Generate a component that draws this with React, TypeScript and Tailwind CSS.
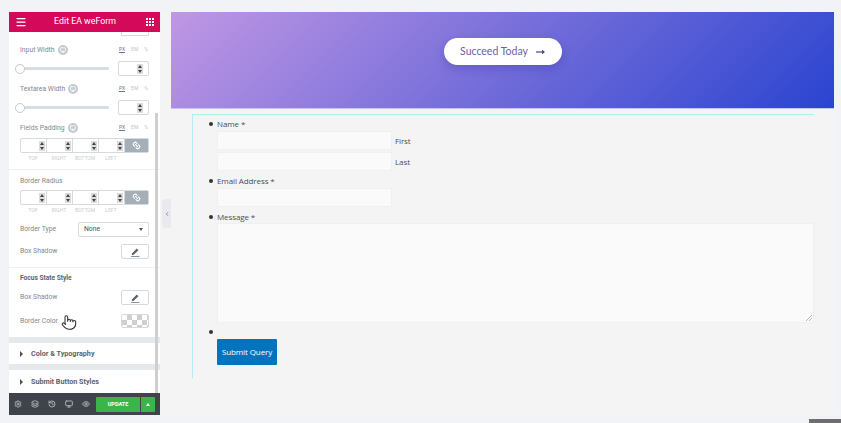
import React from 'react';
import { Menu, Link2, Settings, Layers, History, Monitor, Eye, ChevronLeft, Pointer } from 'lucide-react';

function Spinner() {
  return (
    <div className="w-[6px] h-[10px] bg-[#dcdcdc] flex flex-col items-center justify-center gap-[2px]">
      <span className="w-0 h-0 border-x-[2px] border-x-transparent border-b-[3px] border-b-[#444]" />
      <span className="w-0 h-0 border-x-[2px] border-x-transparent border-t-[3px] border-t-[#444]" />
    </div>
  );
}

function Units() {
  return (
    <div className="flex gap-[6px] text-[5px] text-[#c0c5ca]">
      <span className="text-[#6d7882] underline">PX</span>
      <span>EM</span>
      <span>%</span>
    </div>
  );
}

function InfoDot() {
  return (
    <span className="w-[10px] h-[10px] rounded-full bg-[#c3cad1] flex items-center justify-center">
      <Monitor className="w-[6px] h-[6px] text-white" strokeWidth={3} />
    </span>
  );
}

function SliderRow({ label }: { label: string }) {
  return (
    <div>
      <div className="flex items-center justify-between h-[12px] pr-[1px]">
        <div className="flex items-center gap-[3px]">
          <span>{label}</span>
          <InfoDot />
        </div>
        <Units />
      </div>
      <div className="flex items-center justify-between mt-[5px]">
        <div className="relative w-[90px] h-[3px] rounded bg-[#d5dde5] ml-[-1px]">
          <span className="absolute -left-[4px] -top-[3.5px] w-[10px] h-[10px] rounded-full bg-white border border-[#c4c9cd]" />
        </div>
        <div className="w-[31px] h-[15px] bg-white border border-[#d5dadf] rounded-[2px] flex items-center justify-end pr-[5px]">
          <Spinner />
        </div>
      </div>
    </div>
  );
}

function DimensionRow() {
  const sides = ['TOP', 'RIGHT', 'BOTTOM', 'LEFT'];
  return (
    <div>
      <div className="flex h-[15px] border border-[#d5dadf] rounded-[2px] bg-white">
        {sides.map((s) => (
          <div key={s} className="w-[26px] border-r border-[#d5dadf] flex items-center justify-end pr-[1px]">
            <Spinner />
          </div>
        ))}
        <div className="flex-1 bg-[#a4afb7] flex items-center justify-center">
          <Link2 className="w-[9px] h-[9px] text-white rotate-45" strokeWidth={3} />
        </div>
      </div>
      <div className="flex mt-[2px] text-[5px] leading-[7px] text-[#c8ccd0]">
        {sides.map((s) => (
          <span key={s} className="w-[26px] text-center">{s}</span>
        ))}
      </div>
    </div>
  );
}

function PenRow({ label }: { label: string }) {
  return (
    <div className="flex items-center justify-between h-[15px]">
      <span>{label}</span>
      <div className="w-[28px] h-[15px] bg-white border border-[#d5dadf] rounded-[2px] flex items-center justify-center">
        <svg width="10" height="10" viewBox="0 0 10 10" fill="#5a646c">
          <path d="M2.2 6.2L6.8 1.6 8.4 3.2 3.8 7.8 1.8 8.2Z" />
          <rect x="1" y="9" width="8.5" height="0.7" />
        </svg>
      </div>
    </div>
  );
}

function SectionTitle({ label, h }: { label: string; h: string }) {
  return (
    <div className={`${h} flex items-center pl-[11px] pt-[1px] gap-[8px] text-[7.2px] font-bold text-[#5a646c]`}>
      <span className="w-0 h-0 border-y-[3px] border-y-transparent border-l-[3px] border-l-[#495157]" />
      <span>{label}</span>
    </div>
  );
}

function Sidebar() {
  return (
    <aside className="w-[151px] h-[403px] flex flex-col bg-white font-['Roboto',sans-serif] text-[6.8px] text-[#7d8890] relative">
      <header className="h-[20px] shrink-0 bg-[#d5095a] text-white flex items-center justify-between px-[6px]">
        <Menu className="w-[12px] h-[12px]" strokeWidth={2.5} />
        <span className="text-[8.8px] ml-[-3px]">Edit EA weForm</span>
        <svg width="8" height="8" viewBox="0 0 8 8" fill="white">
          {[0, 3, 6].map((y) =>
            [0, 3, 6].map((x) => <rect key={`${x}-${y}`} x={x} y={y} width="2" height="2" />)
          )}
        </svg>
      </header>

      <div className="flex-1 overflow-hidden relative">
        <div className="pl-[11px] pr-[11px]">
          <div className="h-[4px] flex justify-end">
            <div className="w-[28px] h-[4px] border border-[#d5dadf] border-t-0 bg-white" />
          </div>
          <div className="mt-[8px]"><SliderRow label="Input Width" /></div>
          <div className="mt-[7px]"><SliderRow label="Textarea Width" /></div>
          <div className="mt-[7px]">
            <div className="flex items-center justify-between h-[12px] pr-[1px]">
              <div className="flex items-center gap-[3px]">
                <span>Fields Padding</span>
                <InfoDot />
              </div>
              <Units />
            </div>
            <div className="mt-[4px]"><DimensionRow /></div>
          </div>
        </div>

        <div className="mt-[7px] border-t border-[#eef0f2] pl-[11px] pr-[11px] pt-[6px]">
          <div className="h-[10px] flex items-center">Border Radius</div>
          <div className="mt-[4px]"><DimensionRow /></div>
          <div className="mt-[7px] flex items-center justify-between h-[16px]">
            <span>Border Type</span>
            <div className="w-[71px] h-[15px] bg-white border border-[#d5dadf] rounded-[2px] flex items-center justify-between px-[5px] text-[#495157]">
              <span>None</span>
              <span className="w-0 h-0 border-x-[2.5px] border-x-transparent border-t-[3px] border-t-[#495157]" />
            </div>
          </div>
          <div className="mt-[7px]"><PenRow label="Box Shadow" /></div>
        </div>

        <div className="mt-[8px] border-t border-[#eef0f2] pl-[11px] pr-[11px] pt-[6px]">
          <div className="h-[10px] flex items-center font-bold text-[#5a646c] text-[6.6px]">Focus State Style</div>
          <div className="mt-[6px]"><PenRow label="Box Shadow" /></div>
          <div className="mt-[9px] flex items-center justify-between h-[14px]">
            <span>Border Color</span>
            <div className="w-[28px] h-[14px] border border-[#d5dadf] rounded-[2px] bg-[repeating-conic-gradient(#cfcfcf_0_25%,#ffffff_0_50%)] bg-[length:10px_10px]" />
          </div>
        </div>

        <div className="mt-[9px] h-[6px] bg-[#e6e9ec]" />
        <SectionTitle label="Color & Typography" h="h-[21px]" />
        <div className="h-[6px] bg-[#e6e9ec]" />
        <SectionTitle label="Submit Button Styles" h="h-[23px]" />

        {/* scrollbar */}
        <div className="absolute right-[2px] top-[81px] bottom-0 w-[3px] bg-[#cfcfcf]" />
        {/* pointer */}
        <Pointer className="absolute left-[52px] top-[282px] w-[16px] h-[17px] text-[#333] fill-white z-10" strokeWidth={1.6} />
      </div>

      <footer className="h-[22px] shrink-0 bg-[#3f444b] flex items-center pl-[5px] text-[#a4afb7]">
        <div className="flex gap-[9px]">
          <Settings className="w-[8px] h-[8px]" strokeWidth={3} />
          <Layers className="w-[8px] h-[8px]" strokeWidth={3} />
          <History className="w-[8px] h-[8px]" strokeWidth={3} />
          <Monitor className="w-[8px] h-[8px]" strokeWidth={3} />
          <Eye className="w-[8px] h-[8px]" strokeWidth={3} />
        </div>
        <div className="ml-[6px] w-[44px] h-[15px] bg-[#39b54a] text-white font-bold text-[5.5px] flex items-center justify-center rounded-l-[1px]">UPDATE</div>
        <div className="ml-[1px] w-[14px] h-[15px] bg-[#39b54a] flex items-center justify-center rounded-r-[1px]">
          <span className="w-0 h-0 border-x-[2px] border-x-transparent border-b-[3px] border-b-white" />
        </div>
      </footer>
    </aside>
  );
}

function Hero() {
  return (
    <section className="h-[97px] shrink-0 bg-[linear-gradient(135deg,#c097e4,#2a44d0)] flex items-start justify-center pt-[26px] border-b border-[#c3c5ee]">
      <div className="w-[118px] h-[27px] rounded-full bg-white shadow-[0_4px_10px_rgba(40,40,120,0.25)] flex items-center justify-center gap-[8px] font-['Lato',sans-serif] text-[10.5px] text-[#6a639f]">
        <span>Succeed Today</span>
        <svg width="9" height="6" viewBox="0 0 9 6" fill="#4a4580">
          <rect x="0" y="2.4" width="7" height="1.2" />
          <path d="M6 0.8L9 3 6 5.2Z" />
        </svg>
      </div>
    </section>
  );
}

function Item({ label, children }: { label?: string; children?: React.ReactNode }) {
  return (
    <li className="relative pl-[24px]">
      <span className="absolute left-[16px] top-[5px] w-[4px] h-[4px] rounded-full bg-[#333]" />
      <div className="h-[13px] leading-[13px]">{label}</div>
      {children}
    </li>
  );
}

function Field({ note }: { note?: string }) {
  return (
    <div className="flex items-center gap-[3px]">
      <div className="w-[175px] h-[19px] bg-[#fafafa] border border-[#f0f0f0]" />
      {note && <span>{note}</span>}
    </div>
  );
}

function Form() {
  return (
    <section className="ml-[21px] mt-[5px] w-[622px] h-[264px] border-t border-l border-[#b5ebf7] font-['Open_Sans',sans-serif] text-[8px] tracking-[-0.1px] text-[#4b4f58]">
      <ul className="pt-[2px]">
        <Item label="Name *">
          <div className="mt-[1px] flex flex-col gap-[2px]">
            <Field note="First" />
            <Field note="Last" />
          </div>
        </Item>
        <div className="h-[3px]" />
        <Item label="Email Address *">
          <div className="mt-[1px]"><Field /></div>
        </Item>
        <div className="h-[3px]" />
        <Item label="Message *">
          <div className="relative w-[597px] h-[100px] bg-[#fafafa] border border-[#f0f0f0]">
            <svg className="absolute right-[1px] bottom-[1px]" width="6" height="6" viewBox="0 0 6 6" stroke="#999" strokeWidth="0.7">
              <path d="M0 6L6 0M3 6L6 3" />
            </svg>
          </div>
        </Item>
        <div className="h-[2px]" />
        <Item>
          <button className="mt-[1px] w-[60px] h-[26px] bg-[#0274be] text-white rounded-[1px] flex items-center justify-center">
            Submit Query
          </button>
        </Item>
      </ul>
    </section>
  );
}

export default function App() {
  return (
    <div className="relative w-[841px] h-[423px] overflow-hidden bg-[#f1f3f7] flex pt-[12px] pl-[9px]">
      <Sidebar />
      <main className="h-[403px] flex">
        <div className="w-[11px] bg-[#f4f4f5] flex items-center">
          <div className="ml-[2px] w-[9px] h-[29px] bg-[#e8eaee] rounded-l-[3px] flex items-center justify-center">
            <ChevronLeft className="w-[6px] h-[6px] text-[#6d7882]" strokeWidth={3} />
          </div>
        </div>
        <div className="w-[663px] bg-[#f4f4f5] flex flex-col">
          <Hero />
          <Form />
        </div>
      </main>
      <div className="absolute right-0 bottom-0 w-[32px] h-[4px] bg-[#6e6e6e]" />
    </div>
  );
}
